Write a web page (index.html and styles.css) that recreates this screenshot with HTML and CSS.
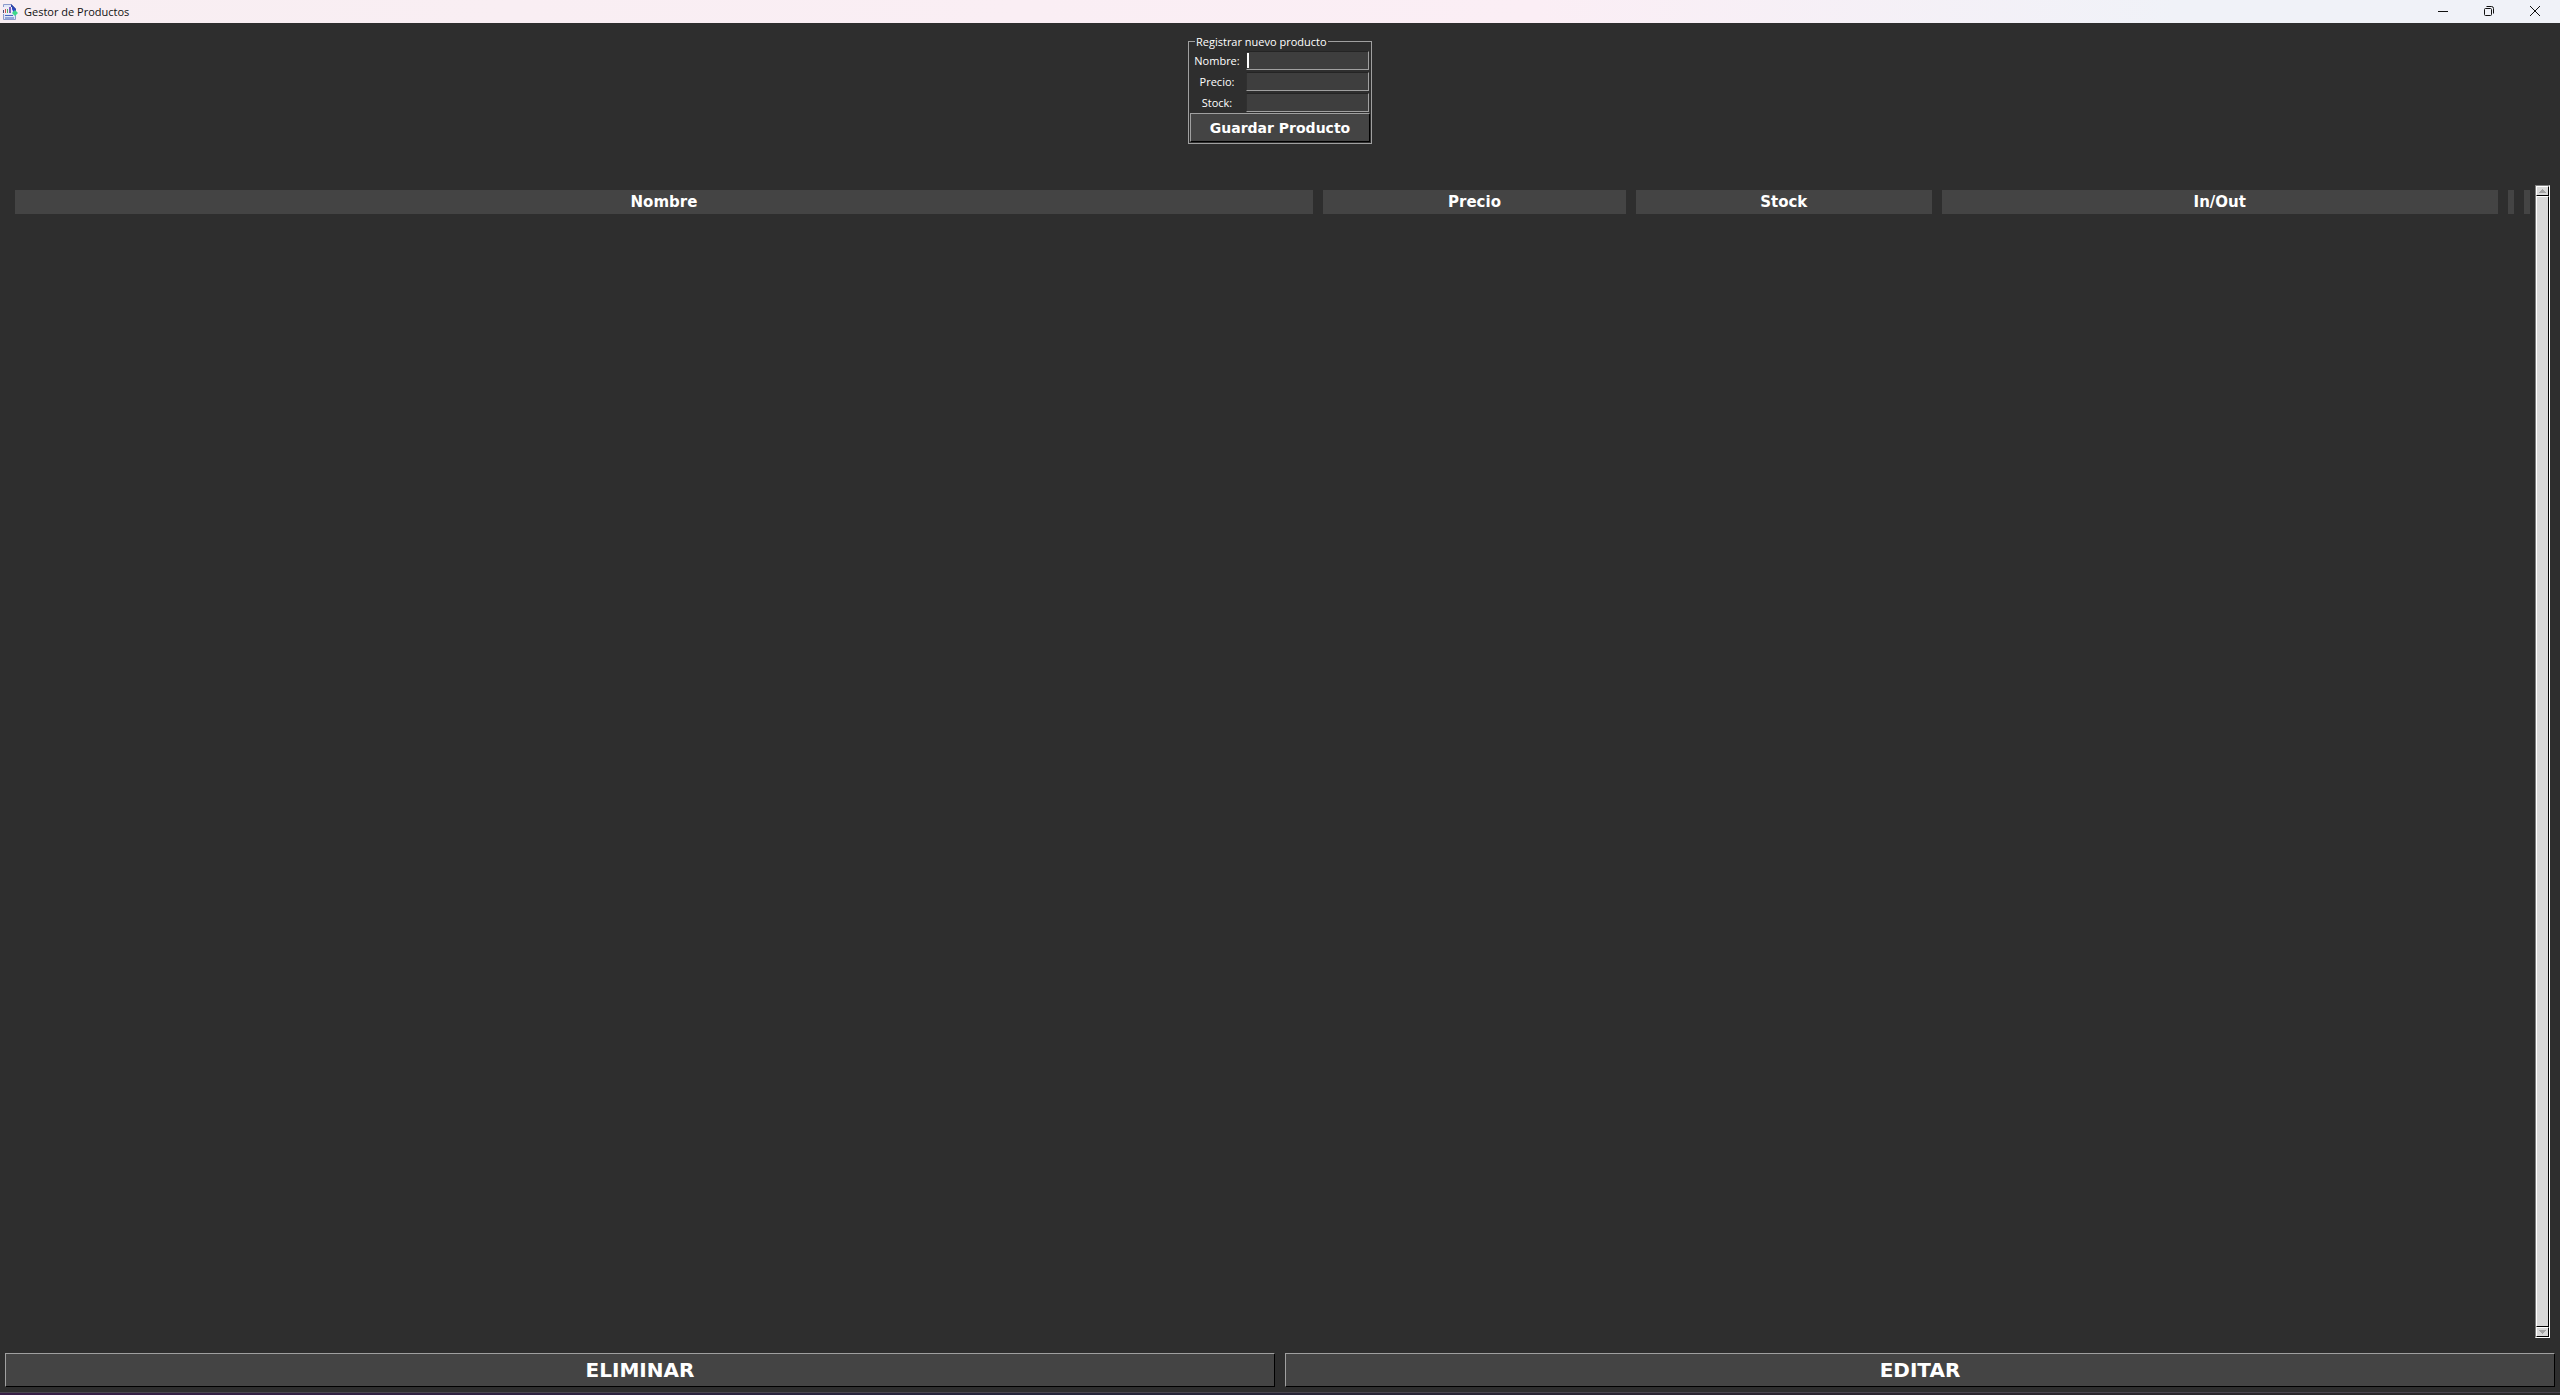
FILE: index.html
```
<!DOCTYPE html>
<html lang="es">
<head>
    <meta charset="UTF-8">
    <meta name="viewport" content="width=device-width, initial-scale=1.0">
    <title>Gestor de Productos</title>
    <link rel="stylesheet" href="styles.css">
</head>
<body>
    <header class="titlebar">
        <svg class="app-icon" viewBox="0 0 16 16" aria-hidden="true">
            <path d="M1.500 .5h8l4 4v11h-12z" fill="#dfe6f8" stroke="#8c9acb"/>
            <path d="M9 0l5 5v3L9 4z" fill="#2f43a8"/>
            <path d="M0 3h10v7H0z" fill="#f1ecf6"/>
            <path d="M1 6h1v3H1z" fill="#4a4a70"/>
            <path d="M3 5h1v4H3z" fill="#d9534f"/>
            <path d="M5 5h1v4H5z" fill="#4fae68"/>
            <path d="M7 3h2v6H7z" fill="#7a5fc0"/>
            <path d="M10 5l2-1 2 4-2 1z" fill="#2948c8"/>
            <path d="M13 6l3 3-3 3-3-3z" fill="#3fd98a"/>
            <path d="M3 11.500h8M3 14h9" stroke="#4a66bd"/>
        </svg>
        <h1 class="window-title">Gestor de Productos</h1>
        <div class="window-controls">
            <button class="window-button" type="button" aria-label="Minimizar">
                <svg viewBox="0 0 10 10"><path d="M0 5.500h10"/></svg>
            </button>
            <button class="window-button" type="button" aria-label="Restaurar">
                <svg viewBox="0 0 10 10"><rect x=".5" y="2.500" width="7" height="7" rx="1"/><path d="M2.500 .5h5a2 2 0 0 1 2 2v5"/></svg>
            </button>
            <button class="window-button" type="button" aria-label="Cerrar">
                <svg viewBox="0 0 10 10"><path d="M0 0l10 10M10 0L0 10"/></svg>
            </button>
        </div>
    </header>

    <main class="window">
        <form class="product-form">
            <fieldset class="product-frame">
                <legend>Registrar nuevo producto</legend>
                <div class="fields">
                    <label for="nombre">Nombre:</label>
                    <span class="entry"><input id="nombre" type="text"><span class="caret"></span></span>
                    <label for="precio">Precio:</label>
                    <span class="entry"><input id="precio" type="text"></span>
                    <label for="stock">Stock:</label>
                    <span class="entry"><input id="stock" type="text"></span>
                </div>
                <button class="button save" type="button">Guardar Producto</button>
            </fieldset>
        </form>

        <section class="product-list">
            <div class="list-view">
                <table class="products">
                    <thead>
                        <tr>
                            <th class="col-name"><div class="heading">Nombre</div></th>
                            <th class="col-price"><div class="heading">Precio</div></th>
                            <th class="col-stock"><div class="heading">Stock</div></th>
                            <th class="col-move"><div class="heading">In/Out</div></th>
                            <th class="col-action"><div class="heading"></div></th>
                            <th class="col-action"><div class="heading"></div></th>
                        </tr>
                    </thead>
                </table>
            </div>
            <div class="scrollbar">
                <button class="arrow" type="button" aria-label="Subir">
                    <svg viewBox="0 0 7 4"><path d="M3 0h1v1h1v1h1v1h1v1H0V3h1V2h1V1h1z"/></svg>
                </button>
                <div class="thumb"></div>
                <button class="arrow" type="button" aria-label="Bajar">
                    <svg viewBox="0 0 7 4"><path d="M0 0h7v1H6v1H5v1H4v1H3V3H2V2H1V1H0z"/></svg>
                </button>
            </div>
        </section>

        <div class="actions">
            <button class="button action" type="button">ELIMINAR</button>
            <button class="button action" type="button">EDITAR</button>
        </div>
    </main>
    <div class="desktop-edge"></div>
</body>
</html>
```
FILE: styles.css
```
* {
    margin: 0;
    padding: 0;
    box-sizing: border-box;
}

body {
    display: flex;
    flex-direction: column;
    height: 100vh;
    overflow: hidden;
    background: #2e2e2e;
    color: #fff;
    font-family: "Segoe UI", "Open Sans", "Noto Sans", sans-serif;
    font-size: 11px;
}

/* Title bar */
.titlebar {
    display: flex;
    align-items: center;
    flex-shrink: 0;
    height: 23px;
    padding: 0 2px;
    background: linear-gradient(90deg, #f8eef2, #fbeef5 60%, #f0f2f8 85%);
    color: #111;
}

.app-icon {
    width: 16px;
    height: 16px;
}

.window-title {
    margin-left: 6px;
    font-size: 11px;
    font-weight: 400;
}

.window-controls {
    display: flex;
    margin-left: auto;
}

.window-button {
    display: flex;
    align-items: center;
    justify-content: center;
    width: 46px;
    height: 21px;
    padding-bottom: 1px;
    border: none;
    background: none;
}

.window-button svg {
    width: 10px;
    height: 10px;
    fill: none;
    stroke: #111;
}

/* Main area */
.window {
    display: flex;
    flex: 1;
    flex-direction: column;
    min-height: 0;
}

.product-form {
    display: flex;
    justify-content: center;
    padding-top: 10px;
}

.product-frame {
    min-width: 0;
    width: 184px;
    border: 1px solid #a0a0a0;
    padding: 1px;
}

.product-frame legend {
    margin-left: 5px;
    padding: 0 1px;
    line-height: 17px;
}

.fields {
    display: grid;
    grid-template-columns: 56px 1fr;
    align-items: center;
    row-gap: 1px;
    padding-right: 1px;
    text-align: center;
}

.fields label {
    padding-right: 2px;
    line-height: 20px;
}

.entry {
    display: block;
    position: relative;
    height: 20px;
}

.entry input {
    display: block;
    width: 100%;
    height: 19px;
    border: 1px solid;
    border-color: #242424 #a0a0a0 #a0a0a0 #303030;
    background: #3e3e3e;
    color: #fff;
    font: inherit;
}

.caret {
    position: absolute;
    top: 2px;
    left: 1px;
    width: 2px;
    height: 15px;
    background: #fff;
}

.button {
    border: 1px solid;
    border-color: #a0a0a0 #000 #000 #a0a0a0;
    background: #444;
    color: #fff;
    font-family: Verdana, "DejaVu Sans", sans-serif;
    font-weight: 700;
}

.save {
    display: block;
    width: 100%;
    height: 29px;
    font-size: 14px;
}

/* Product list */
.product-list {
    display: flex;
    flex: 1;
    min-height: 0;
    margin: 41px 10px 15px;
}

.list-view {
    flex: 1;
    padding-top: 5px;
}

.products {
    width: 100%;
    table-layout: fixed;
    border-collapse: collapse;
}

.products th {
    padding: 0 5px;
}

.col-name {
    width: 51.8%;
}

.col-price {
    width: 12.4%;
}

.col-stock {
    width: 12.1%;
}

.col-action {
    width: 16px;
}

.heading {
    height: 24px;
    background: #444;
    font-family: Verdana, "DejaVu Sans", sans-serif;
    font-size: 15px;
    line-height: 24px;
}

.scrollbar {
    display: flex;
    flex-direction: column;
    width: 15px;
    border: 1px solid;
    border-color: #808080 #fff #fff #808080;
    background: #d9d9d9;
}

.arrow {
    display: flex;
    align-items: center;
    justify-content: center;
    height: 10px;
    border: 1px solid;
    border-color: #fff #000 #000 #fff;
    background: #d9d9d9;
}

.arrow svg {
    width: 7px;
    height: 4px;
    fill: #a3a3a3;
}

.thumb {
    flex: 1;
    border: 1px solid;
    border-color: #fff #000 #000 #fff;
    background: #d9d9d9;
}

/* Bottom buttons */
.actions {
    display: flex;
    gap: 10px;
    padding: 0 5px 5px;
}

.action {
    flex: 1;
    height: 34px;
    font-size: 20px;
}

.desktop-edge {
    flex-shrink: 0;
    height: 3px;
    border-top: 1px solid #4a4650;
    background: linear-gradient(90deg, #371f46, #25253a 40%, #2b2530 70%, #292929);
}
```
